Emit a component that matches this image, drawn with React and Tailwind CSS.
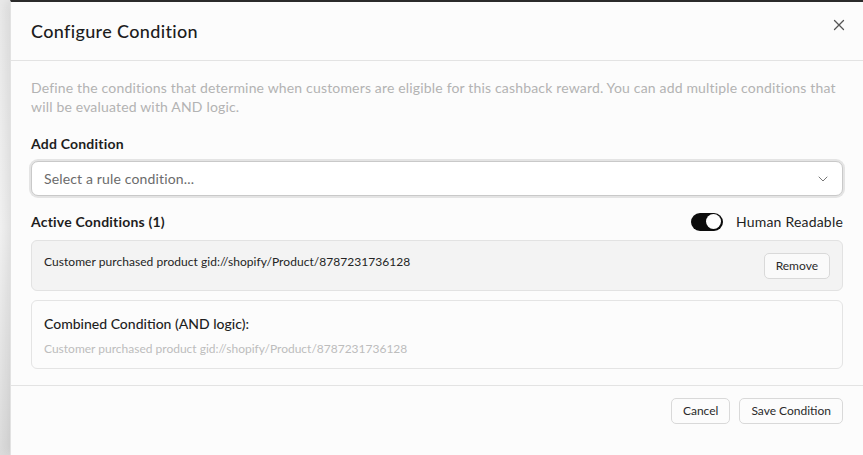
import { useState } from "react";

const productRule = "Customer purchased product gid://shopify/Product/8787231736128";

export default function App() {
  const [readable, setReadable] = useState(true);

  return (
    <div className="h-[455px] w-[863px] overflow-hidden flex bg-[#ececec] font-['Lato','Liberation_Sans',sans-serif]">
      {/* backdrop edge */}
      <div className="w-[10px] shrink-0 bg-gradient-to-b from-[#e9e9e9] via-[#f2f2f2] to-[#dcdcdc]" />

      <div className="flex-1 flex flex-col bg-[#fcfcfc] border-l border-[#e2e2e2] border-t-2 border-t-[#2b2b2b] shadow-[-4px_0_10px_rgba(0,0,0,0.08)]">
        {/* header */}
        <div className="h-[59px] shrink-0 flex items-center justify-between pl-[20px] pr-[18px] border-b border-[#e3e3e3]">
          <h2 className="text-[18px] text-[#1c1c1c] font-medium tracking-[0.35px] mt-[1px]">Configure Condition</h2>
          <button className="text-[#555] mb-[12px]">
            <svg width="12" height="12" viewBox="0 0 12 12" fill="none" stroke="currentColor" strokeWidth="1.3" strokeLinecap="round">
              <path d="M1.5 1.5l9 9M10.5 1.5l-9 9" />
            </svg>
          </button>
        </div>

        {/* body */}
        <div className="px-[20px] pt-[17px] pb-[16px] border-b border-[#e3e3e3]">
          <p className="text-[14px] leading-[19px] tracking-[0.17px] text-[#b3b3b3]">
            Define the conditions that determine when customers are eligible for this cashback reward. You can add multiple conditions that will be evaluated with AND logic.
          </p>

          <div className="mt-[17px] text-[14px] leading-[21px] tracking-[0.2px] font-bold text-[#1e1e1e]">Add Condition</div>
          <div className="mt-[7px] h-[35px] rounded-[7px] border border-[#c9c9c9] ring-[2px] ring-[#e4e4e4] bg-white flex items-center justify-between pl-[12px] pr-[14px]">
            <span className="text-[14px] tracking-[0.15px] text-[#6b6b6b]">Select a rule condition...</span>
            <svg width="10" height="6" viewBox="0 0 10 6" fill="none" stroke="#777" strokeWidth="1" strokeLinecap="round" strokeLinejoin="round">
              <path d="M1 1l4 4 4-4" />
            </svg>
          </div>

          <div className="mt-[15px] h-[21px] flex items-center justify-between">
            <span className="text-[14px] tracking-[0.2px] font-bold text-[#1e1e1e]">Active Conditions (1)</span>
            <div className="flex items-center gap-[13px]">
              <button
                onClick={() => setReadable(!readable)}
                className={"w-[32px] h-[18px] rounded-full p-[2px] flex items-center " + (readable ? "bg-[#0c0c0c] justify-end" : "bg-[#d4d4d4] justify-start")}
              >
                <span className="w-[15px] h-[15px] rounded-full bg-white block" />
              </button>
              <span className="text-[14px] tracking-[0.2px] text-[#1e1e1e]">Human Readable</span>
            </div>
          </div>

          <div className="mt-[8px] h-[51px] rounded-[6px] border border-[#e2e2e2] bg-[#f3f3f3] flex justify-between pl-[12px] pr-[12px]">
            <span className="text-[12px] tracking-[0.05px] text-[#242424] mt-[12px]">{productRule}</span>
            <button className="self-center mt-[1px] h-[26px] px-[11px] rounded-[5px] border border-[#d9d9d9] bg-[#fafafa] text-[12px] text-[#2a2a2a]">
              Remove
            </button>
          </div>

          <div className="mt-[9px] h-[69px] rounded-[6px] border border-[#e4e4e4] bg-[#fcfcfc] px-[12px] pt-[12px]">
            <div className="text-[14px] font-medium text-[#1e1e1e]">Combined Condition (AND logic):</div>
            <div className="mt-[6px] text-[12px] text-[#bdbdbd]">{productRule}</div>
          </div>
        </div>

        {/* footer */}
        <div className="flex justify-end gap-[9px] px-[20px] pt-[12px]">
          <button className="h-[26px] px-[11px] rounded-[5px] border border-[#d9d9d9] bg-[#fcfcfc] text-[12px] text-[#2a2a2a]">Cancel</button>
          <button className="h-[26px] px-[11px] rounded-[5px] border border-[#d9d9d9] bg-[#fcfcfc] text-[12px] text-[#2a2a2a]">Save Condition</button>
        </div>
      </div>
    </div>
  );
}
